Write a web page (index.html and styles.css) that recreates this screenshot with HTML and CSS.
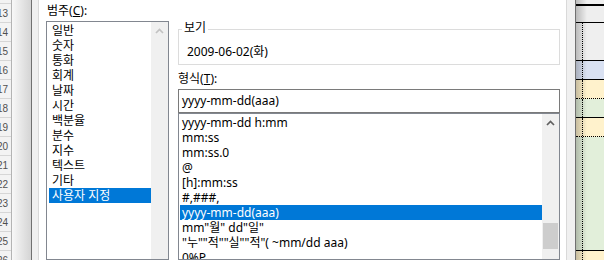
FILE: index.html
```html
<!DOCTYPE html>
<html lang="ko">
<head>
<meta charset="utf-8">
<title>셀 서식</title>
<link rel="stylesheet" href="styles.css">
</head>
<body>
<div class="screen">
  <div class="sheet-left">
    <div class="rowheads">
      <div class="rh top"></div>
      <div class="rh"><span>13</span></div>
      <div class="rh"><span>14</span></div>
      <div class="rh"><span>15</span></div>
      <div class="rh"><span>16</span></div>
      <div class="rh"><span>17</span></div>
      <div class="rh"><span>18</span></div>
      <div class="rh"><span>19</span></div>
      <div class="rh"><span>20</span></div>
      <div class="rh"><span>21</span></div>
      <div class="rh"><span>22</span></div>
      <div class="rh"><span>23</span></div>
      <div class="rh"><span>24</span></div>
      <div class="rh"><span>25</span></div>
      <div class="rh"><span>26</span></div>
    </div>
    <div class="shade-left"></div>
  </div>

  <div class="dialog">
    <div class="page">
      <div class="col-cat">
        <div class="label">범주(<u>C</u>):</div>
        <div class="listbox">
          <ul class="items cat-items">
            <li>일반</li>
            <li>숫자</li>
            <li>통화</li>
            <li>회계</li>
            <li>날짜</li>
            <li>시간</li>
            <li>백분율</li>
            <li>분수</li>
            <li>지수</li>
            <li>텍스트</li>
            <li>기타</li>
            <li class="sel">사용자 지정</li>
          </ul>
          <div class="vscroll">
            <div class="arrow">
              <svg width="9" height="6" viewBox="0 0 9 6"><path d="M1 5 L4.5 1.5 L8 5" fill="none" stroke="#c2c2c2" stroke-width="1.7"/></svg>
            </div>
          </div>
        </div>
      </div>

      <div class="col-fmt">
        <fieldset class="preview">
          <legend>보기</legend>
          <div class="sample">2009-06-02(화)</div>
        </fieldset>
        <div class="label fmt-label">형식(<u>T</u>):</div>
        <div class="input">yyyy-mm-dd(aaa)</div>
        <div class="listbox">
          <ul class="items fmt-items">
            <li>yyyy-mm-dd h:mm</li>
            <li>mm:ss</li>
            <li>mm:ss.0</li>
            <li>@</li>
            <li>[h]:mm:ss</li>
            <li>#,###,</li>
            <li class="sel">yyyy-mm-dd(aaa)</li>
            <li>mm"월" dd"일"</li>
            <li>"누""적""실""적"( ~mm/dd aaa)</li>
            <li>0%P</li>
          </ul>
          <div class="vscroll">
            <div class="arrow">
              <svg width="9" height="6" viewBox="0 0 9 6"><path d="M1 5 L4.5 1.5 L8 5" fill="none" stroke="#606060" stroke-width="1.7"/></svg>
            </div>
            <div class="thumb"></div>
          </div>
        </div>
      </div>
    </div>
  </div>

  <div class="sheet-right">
    <div class="sr-top"></div>
    <div class="sr-head"></div>
    <div class="sr-row gray tall"><div class="a"></div><div class="b"></div></div>
    <div class="sr-row blue"><div class="a"></div><div class="b"></div></div>
    <div class="sr-row yellow dotted"><div class="a"></div><div class="b"></div></div>
    <div class="sr-row green"><div class="a"></div><div class="b"></div></div>
    <div class="sr-row yellow dotted"><div class="a"></div><div class="b"></div></div>
    <div class="sr-row green big"><div class="a"></div><div class="b"></div></div>
    <div class="sr-row yellow rest"><div class="a"></div><div class="b"></div></div>
  </div>
</div>
</body>
</html>
```

FILE: styles.css
```css
* { box-sizing: border-box; }
html, body { margin: 0; padding: 0; }
body {
  width: 604px;
  height: 260px;
  overflow: hidden;
  background: #fff;
  font-family: "Noto Sans", "Noto Sans CJK KR", sans-serif;
  font-size: 12px;
  color: #000;
}
.screen { display: flex; height: 260px; }

/* left spreadsheet strip */
.sheet-left { display: flex; width: 31px; flex: none; }
.rowheads {
  width: 12px;
  background: #f3f3f3;
  border-right: 1px solid #b4b4b4;
  overflow: hidden;
  font-family: "Liberation Sans", sans-serif;
  font-size: 10px;
  color: #505050;
}
.rh {
  height: 19px;
  border-bottom: 1px solid #d6d6d6;
  display: flex;
  justify-content: flex-end;
  align-items: center;
  padding-right: 3px;
  white-space: nowrap;
}
.rh.top { height: 4px; }
.shade-left { flex: 1; background: linear-gradient(to right, #f8f8f8, #d4d4d4); }

/* dialog */
.dialog {
  width: 545px;
  flex: none;
  background: #f0f0f0;
  border-left: 1px solid #707070;
  border-right: 1px solid #707070;
  padding: 0 8px 0 6px;
}
.page {
  height: 100%;
  background: #fff;
  border-left: 1px solid #d9d9d9;
  border-right: 1px solid #d9d9d9;
  display: flex;
  gap: 9px;
  padding: 0 6px 0 7px;
}
.col-cat { width: 123px; flex: none; display: flex; flex-direction: column; }
.col-fmt { width: 382px; flex: none; display: flex; flex-direction: column; }

.label { height: 21px; padding: 3px 0 0 1px; line-height: 15px; white-space: nowrap; }
.fmt-label { margin-top: 3px; padding-left: 0; }

.listbox {
  flex: 1;
  min-height: 0;
  border: 1px solid #828790;
  display: flex;
}
.items {
  list-style: none;
  margin: 0;
  flex: 1;
  min-width: 0;
  overflow: hidden;
  padding: 1px 0 0 2px;
}
.fmt-items { padding-left: 1px; }
.items li { height: 15px; line-height: 15px; padding-left: 3px; white-space: nowrap; }
.fmt-items li { padding-left: 2px; }
.items li.sel { background: #0078d7; color: #fff; }

.vscroll {
  width: 17px;
  flex: none;
  background: #f0f0f0;
  display: flex;
  flex-direction: column;
  align-items: center;
}
.arrow { width: 17px; height: 17px; display: flex; align-items: center; justify-content: center; }
.arrow svg { display: block; }
.thumb { width: 15px; height: 26px; margin-top: 92px; background: #cdcdcd; }

/* preview group */
.preview {
  margin: 20px 0 0;
  padding: 5px 8px 5px 8px;
  border: 1px solid #dcdcdc;
  min-width: 0;
}
.preview legend { padding: 0 2px 4px; margin-left: -5px; line-height: 15px; }
.sample { line-height: 15px; white-space: nowrap; }

.input {
  height: 24px;
  border: 1px solid #7a7a7a;
  line-height: 22px;
  padding-left: 3px;
  white-space: nowrap;
}

/* right spreadsheet strip */
.sheet-right {
  flex: 1;
  position: relative;
  overflow: hidden;
  display: flex;
  flex-direction: column;
}
.sheet-right::before {
  content: "";
  position: absolute;
  left: 0; top: 0; bottom: 0;
  width: 11px;
  background: linear-gradient(to right, rgba(0,0,0,0.22), rgba(0,0,0,0));
}
.sr-top { height: 6px; background: #f0f0f0; border-bottom: 2px solid #000; }
.sr-head { height: 17px; background: #eeeeee; border-bottom: 1px solid #000; }
.sr-row { display: flex; height: 19px; border-bottom: 1px solid #000; }
.sr-row.dotted { border-bottom-style: dotted; }
.sr-row.tall { height: 38px; }
.sr-row.big { height: 114px; }
.sr-row.rest { flex: 1; border-bottom: 0; }
.sr-row .a { width: 7px; border-right: 1px dotted #000; }
.sr-row .b { flex: 1; }
.gray { background: #efefef; }
.blue { background: #d9e1f2; }
.yellow { background: #fff2cc; }
.green { background: #e2efda; }
```
